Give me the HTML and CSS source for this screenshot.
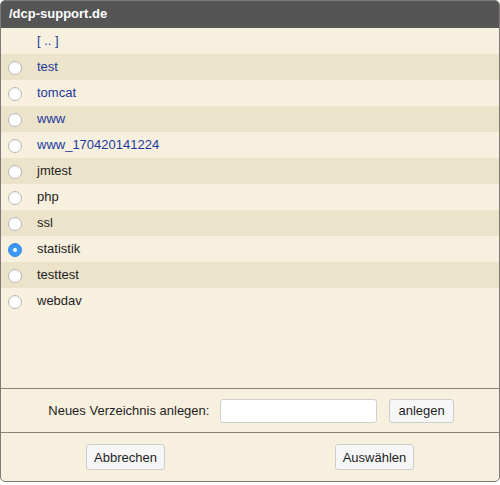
FILE: index.html
```html
<!DOCTYPE html>
<html lang="de">
<head>
<meta charset="utf-8">
<title>Verzeichnis wählen</title>
<link rel="stylesheet" href="styles.css">
</head>
<body>
<div class="dialog">
  <div class="header">/dcp-support.de</div>
  <div class="list">
    <div class="row"><span class="radio-slot"></span><span class="name link">[ .. ]</span></div>
    <div class="row alt"><input class="radio" type="radio" name="dir"><span class="name link">test</span></div>
    <div class="row"><input class="radio" type="radio" name="dir"><span class="name link">tomcat</span></div>
    <div class="row alt"><input class="radio" type="radio" name="dir"><span class="name link">www</span></div>
    <div class="row"><input class="radio" type="radio" name="dir"><span class="name link">www_170420141224</span></div>
    <div class="row alt"><input class="radio" type="radio" name="dir"><span class="name">jmtest</span></div>
    <div class="row"><input class="radio" type="radio" name="dir"><span class="name">php</span></div>
    <div class="row alt"><input class="radio" type="radio" name="dir"><span class="name">ssl</span></div>
    <div class="row"><input class="radio" type="radio" name="dir" checked><span class="name">statistik</span></div>
    <div class="row alt"><input class="radio" type="radio" name="dir"><span class="name">testtest</span></div>
    <div class="row"><input class="radio" type="radio" name="dir"><span class="name">webdav</span></div>
  </div>
  <div class="create">
    <label class="create-label" for="newdir">Neues Verzeichnis anlegen:</label>
    <input class="text-input" id="newdir" type="text">
    <button class="btn" type="button">anlegen</button>
  </div>
  <div class="actions">
    <div class="cell"><button class="btn btn-lg" type="button">Abbrechen</button></div>
    <div class="cell"><button class="btn btn-lg" type="button">Auswählen</button></div>
  </div>
</div>
</body>
</html>
```
FILE: styles.css
```css
html, body {
  margin: 0;
  padding: 0;
  background: #ffffff;
}

body {
  font-family: "Liberation Sans", Arial, sans-serif;
  font-size: 13px;
  color: #1e1e1e;
}

.dialog {
  box-sizing: border-box;
  width: 500px;
  height: 482px;
  border: 1px solid #7e7b75;
  border-radius: 5px;
  background: #f8f0df;
  display: flex;
  flex-direction: column;
  overflow: hidden;
}

.header {
  height: 27px;
  line-height: 26px;
  background: #555555;
  color: #ffffff;
  font-weight: bold;
  font-size: 13px;
  padding-left: 8px;
  flex: none;
}

.list {
  flex: 1;
}

.row {
  height: 26px;
  display: flex;
  align-items: center;
  padding-left: 7px;
  gap: 15px;
}

.row.alt {
  background: #ece4ca;
}

.radio-slot {
  width: 14px;
  height: 14px;
  flex: none;
}

.radio {
  appearance: none;
  -webkit-appearance: none;
  margin: 2px 0 0 0;
  width: 14px;
  height: 14px;
  flex: none;
  box-sizing: border-box;
  border-radius: 50%;
  border: 1px solid #b9b9b9;
  background: #ffffff;
  box-shadow: inset 0 1px 1px rgba(0,0,0,0.06);
  position: relative;
}

.radio:checked {
  background: #3b99fc;
  border-color: #3a8ce6;
}

.radio:checked::after {
  content: "";
  position: absolute;
  left: 4px;
  top: 4px;
  width: 4px;
  height: 4px;
  border-radius: 50%;
  background: #ffffff;
}

.name {
  line-height: 26px;
}

.link {
  color: #1b3a9c;
}

.create {
  height: 43px;
  flex: none;
  border-top: 1px solid #8a8478;
  display: flex;
  align-items: center;
  justify-content: center;
}

.create-label {
  margin-right: 11px;
  margin-left: 2px;
}

.text-input {
  box-sizing: border-box;
  width: 157px;
  height: 24px;
  border: 1px solid #cfcfcf;
  border-radius: 3px;
  background: #ffffff;
  margin: 0 12px 0 0;
  padding: 0 4px;
  font: inherit;
}

.btn {
  box-sizing: border-box;
  height: 24px;
  padding: 0 8px;
  border: 1px solid #cdcdcd;
  border-radius: 3px;
  background: #f6f6f6;
  color: #1e1e1e;
  font-family: "Liberation Sans", Arial, sans-serif;
  font-size: 13px;
  margin: 0;
}

.btn-lg {
  height: 26px;
  padding: 0 7px;
}

.actions {
  height: 48px;
  flex: none;
  border-top: 1px solid #8a8478;
  display: grid;
  grid-template-columns: 1fr 1fr;
  align-items: center;
}

.cell {
  display: flex;
  justify-content: center;
}
```
